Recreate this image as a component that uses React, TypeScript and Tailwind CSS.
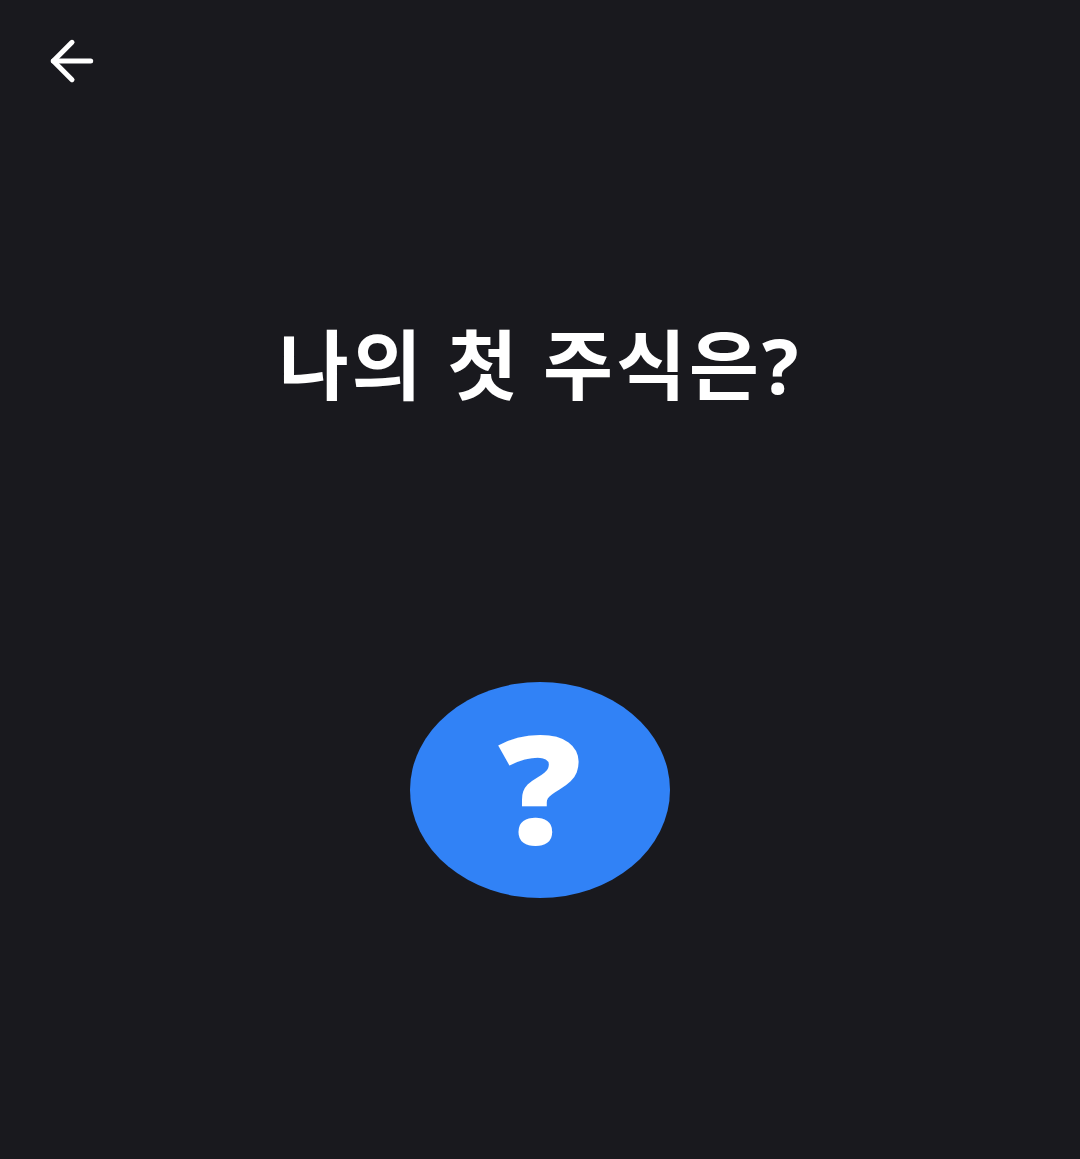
import { ArrowLeft } from 'lucide-react'

export default function App() {
  return (
    <div className="min-h-[1159px] w-full bg-[#19191e] flex flex-col" style={{ fontFamily: '"Noto Sans", "Noto Sans CJK KR", sans-serif' }}>
      <div className="h-[122px] px-[40px] pt-[29px]">
        <button className="block text-white">
          <ArrowLeft size={64} strokeWidth={1.9} />
        </button>
      </div>

      <h1 className="mt-[193px] text-center text-white font-bold text-[76px] leading-[100px] tracking-[3px]">
        나의 첫 주식은?
      </h1>

      <div className="mt-[267px] flex justify-center">
        <div className="w-[260px] h-[216px] rounded-[50%] bg-[#3182f6] flex items-center justify-center">
          <span className="text-white font-black text-[150px] leading-none -mt-[9px] scale-x-110" style={{ fontFamily: '"Noto Sans", sans-serif' }}>?</span>
        </div>
      </div>
    </div>
  )
}
